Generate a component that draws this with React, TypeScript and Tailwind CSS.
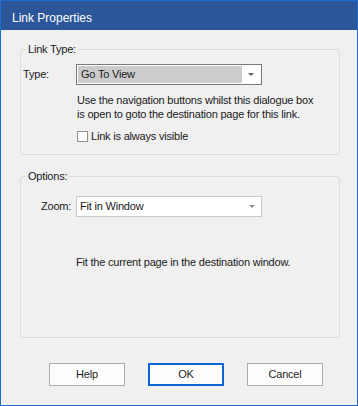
import React from "react";

const font = { fontFamily: '"Liberation Sans", Arial, sans-serif' };

function Arrow({ color }: { color: string }) {
  return (
    <svg width="6" height="3" viewBox="0 0 6 3" className="block">
      <path d="M0 0H6L3 3Z" fill={color} />
    </svg>
  );
}

function Button({ label, primary }: { label: string; primary?: boolean }) {
  return (
    <button
      className={
        "w-[76px] h-[23px] bg-[#fdfdfd] text-[11px] text-[#1e1e1e] flex items-center justify-center " +
        (primary ? "border-2 border-[#0a66d2]" : "border border-[#adadad]")
      }
    >
      {label}
    </button>
  );
}

export default function App() {
  return (
    <div
      style={font}
      className="w-[358px] h-[406px] border border-[#1c6dd0] bg-[#f0f0f0] flex flex-col text-[11px] text-[#1a1a1a] tracking-[-0.2px] select-none"
    >
      <div className="h-[29px] bg-[#2b579a] text-white text-[12px] tracking-normal flex items-center pl-[11px] pt-[4px]">
        Link Properties
      </div>

      <div className="flex flex-col pl-[19px]">
        <fieldset className="mt-[11px] w-[320px] h-[114px] border border-[#dcdcdc] rounded-[3px]">
          <legend className="ml-[5px] px-[2px] leading-[16px]">Link Type:</legend>
          <div className="flex items-center mt-[7px] pl-[2px]">
            <span className="w-[53px]">Type:</span>
            <div className="w-[186px] h-[21px] border border-[#7a7a7a] bg-white flex p-px">
              <div className="flex-1 bg-[#cccccc] flex items-center pl-[3px]">Go To View</div>
              <div className="w-[18px] flex items-center justify-center">
                <Arrow color="#606060" />
              </div>
            </div>
          </div>
          <div className="pl-[56px] mt-[8px] leading-[14px]">
            <p>Use the navigation buttons whilst this dialogue box</p>
            <p>is open to goto the destination page for this link.</p>
            <label className="flex items-center gap-[3px] mt-[8px] h-[14px]">
              <span className="w-[11px] h-[11px] border border-[#8f8f8f] bg-white" />
              <span>Link is always visible</span>
            </label>
          </div>
        </fieldset>

        <fieldset className="mt-[13px] w-[320px] h-[170px] border border-[#dcdcdc] rounded-[3px]">
          <legend className="ml-[5px] px-[2px] leading-[16px]">Options:</legend>
          <div className="flex items-center mt-[12px] pl-[20px]">
            <span className="w-[35px]">Zoom:</span>
            <div className="w-[186px] h-[21px] border border-[#c8c8c8] bg-white flex">
              <div className="flex-1 flex items-center pl-[3px]">Fit in Window</div>
              <div className="w-[19px] flex items-center justify-center">
                <Arrow color="#8a8a8a" />
              </div>
            </div>
          </div>
          <p className="pl-[55px] mt-[38px] leading-[14px]">Fit the current page in the destination window.</p>
        </fieldset>

        <div className="flex gap-[23px] mt-[25px] pl-[29px]">
          <Button label="Help" />
          <Button label="OK" primary />
          <Button label="Cancel" />
        </div>
      </div>
    </div>
  );
}
